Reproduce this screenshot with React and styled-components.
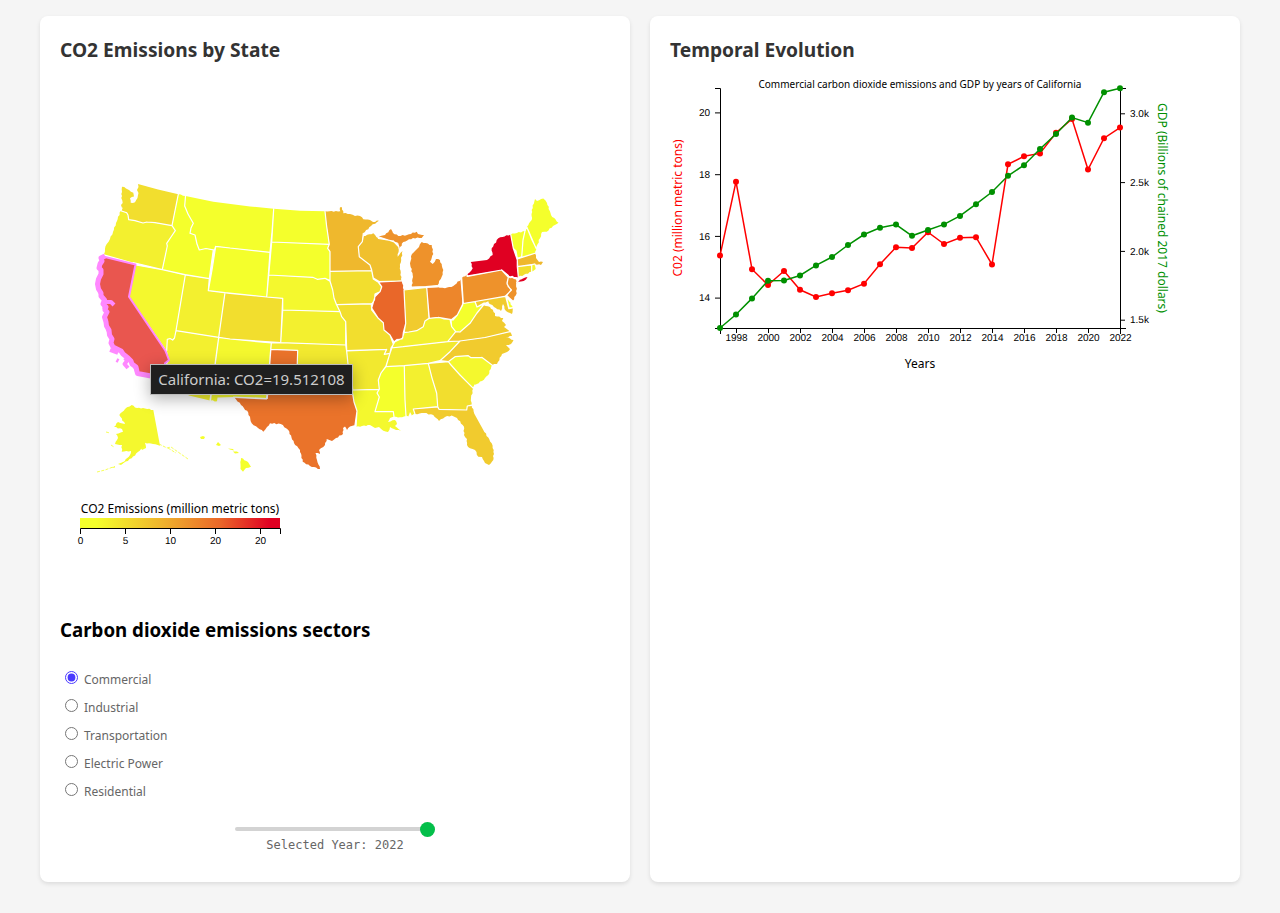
import React, { useState } from "react";
import styled, { createGlobalStyle } from "styled-components";

const GlobalStyle = createGlobalStyle`
  body { margin: 0; background: #f5f5f5; font-family: "Noto Sans", sans-serif; }
  * { box-sizing: border-box; }
`;

const Dashboard = styled.main`
  display: grid;
  grid-template-columns: 590px 590px;
  gap: 20px;
  justify-content: center;
  padding: 16px 0 31px;
`;

const Card = styled.section`
  height: 866px;
  padding: 20px;
  background: #fff;
  border-radius: 8px;
  box-shadow: 0 2px 4px rgba(0, 0, 0, 0.1);
`;

const Title = styled.h3`
  margin: ${(p) => p.$margin || "0"};
  font-size: ${(p) => p.$size || "19.2px"};
  line-height: 28px;
  font-weight: 700;
  color: ${(p) => p.$color || "#333"};
`;

const MapArea = styled.div`
  position: relative;
  height: 540px;
`;

const Drawing = styled.svg`
  display: block;
  overflow: visible;
`;

const StateShape = styled.path`
  fill: ${(p) => p.$fill};
`;

const Borders = styled.path`
  fill: none;
  stroke: #fff;
  stroke-width: 1.2px;
  stroke-linejoin: round;
  stroke-linecap: round;
`;

const SelectedState = styled.path`
  fill: #e9564f;
  stroke: #ff88ff;
  stroke-width: ${(p) => p.$width || 2}px;
  stroke-linejoin: round;
`;

const Coast = styled(SelectedState)`
  fill: none;
`;

const Label = styled.text`
  font-family: "Noto Sans", sans-serif;
  font-size: ${(p) => p.$size || 12}px;
  fill: ${(p) => p.$color || "#000"};
  text-anchor: middle;
`;

const TickLabel = styled.text`
  font-family: "Liberation Sans", Arial, sans-serif;
  font-size: 10px;
  fill: #000;
  text-anchor: ${(p) => p.$anchor || "middle"};
  text-rendering: geometricPrecision;
`;

const AxisLine = styled.path`
  fill: none;
  stroke: #000;
`;

const Series = styled.path`
  fill: none;
  stroke: ${(p) => p.$color};
  stroke-width: 1.5px;
`;

const Tooltip = styled.div`
  position: absolute;
  left: 90px;
  top: 300px;
  width: 203px;
  height: 31px;
  border: 1px solid #bbb;
  background: #1f1f1f;
  color: #ccc;
  font-size: 15px;
  line-height: 29px;
  text-align: center;
  white-space: nowrap;
  box-shadow: 0 4px 16px rgba(0, 0, 0, 0.3);
`;

const SectorList = styled.div`
  display: flex;
  flex-direction: column;
  margin-top: 21px;
`;

const Sector = styled.label`
  display: flex;
  align-items: center;
  height: 28px;
  font-size: 12px;
  color: #666;
`;

const Radio = styled.input`
  width: 13px;
  height: 13px;
  margin: 0 6px 3px 5px;
  accent-color: #4a3aff;
`;

const YearPicker = styled.div`
  display: flex;
  flex-direction: column;
  align-items: center;
  padding-top: 16px;
`;

const Slider = styled.input`
  appearance: none;
  width: 200px;
  height: 16px;
  margin: 0;
  background: transparent;
  &::-webkit-slider-runnable-track {
    height: 4px;
    border-radius: 2px;
    background: #d3d3d3;
  }
  &::-webkit-slider-thumb {
    appearance: none;
    width: 15px;
    height: 15px;
    margin-top: -5px;
    border-radius: 50%;
    background: #04bf4a;
  }
`;

const YearText = styled.span`
  font-family: "DejaVu Sans Mono", monospace;
  font-size: 12px;
  line-height: 16px;
  color: #666;
`;

const C = {
  low: "#f4ff2c", pale: "#f4f82e", soft: "#f3f02f", mild: "#f2e92f",
  gold: "#f2de2e", amber: "#f1cb2e", sand: "#f0c02e", tan: "#efb82d",
  orange: "#ee922b", deep: "#ed862b", texas: "#ea732a", illinois: "#e96729",
  red: "#e00022",
};

const states = [
  ["WA", "gold", "120.9,210.7 122,208 121,205 122.7,203 121.3,198 122,192 122,186.7 126,188.5 129,190 133.3,192.7 134,196.5 130,198.3 130.7,202.7 135,202.3 137.5,198 138.5,193 137,190 138.5,187 138,184 158,189.5 178.3,194.3 172,225.7 155,222.7 147,222 143,223 135,220.7 128.7,219.7 128,215 126.7,212.7"],
  ["OR", "soft", "120.7,210.7 126.7,212.7 128,215 128.7,219.7 135,220.7 143,223 147,222 155,222.7 172,225.7 175.3,230.7 171,237 166.7,243.3 167.3,246 162.3,269.7 133,262.5 104,254.3 105,249 106.7,244 110,239 113,232 116,223"],
  ["ID", "low", "178.3,194.3 185.5,196 184.7,206 188,214 193.3,223.3 191,228 190,233.3 195,235 197,244 199.3,250 206,248.5 213.3,250 209.3,278.7 185,274.5 162.3,269.7 167.3,246 166.7,243.3 171,237 175.3,230.7 172,225.7"],
  ["MT", "low", "185.5,196 213.3,201.7 250,206.5 273.7,208.7 272,232 270,252.3 230,248 215.7,246.3 214.5,250 206,248.5 199.3,250 197,244 195,235 190,233.3 191,228 193.3,223.3 188,214 184.7,206"],
  ["WY", "low", "215.7,246.3 230,248 270,252.3 266.7,297 230,293.3 208.3,290.7 212,270"],
  ["NV", "pale", "136,265 162.3,269.7 185.3,275 176,330.7 174.5,338 172.7,340 170,338.5 167.3,339.3 166.7,350.7 129.3,296.7"],
  ["UT", "soft", "185.3,275 209.3,278.7 208.3,290.7 225,292.7 218.7,337.3 176,330.7"],
  ["CO", "gold", "225,292.7 266.7,297 282.7,298.3 280.7,342.7 230,339 218.7,337.3"],
  ["AZ", "soft", "176,330.7 218.7,337.3 210,400.5 189,395.5 164,380 166,367 169.3,360 166.7,350.7 167.3,339.3 170,338.5 172.7,340 174.5,338"],
  ["NM", "pale", "218.7,337.3 230,339 271.3,343 267.3,398.5 233.5,397 217.5,397.5 217,401.3 210.5,400.5"],
  ["TX", "texas", "270.7,349.3 297.7,350.3 297,372 324,387 352,390 354,402 357,411 355,425 350,426.5 347,430 345,426.5 343,428 343,434 336,438 332,441 326.7,439 325,445 319,450 320,454 315.5,453 317,460 320,469 310,466 302.7,461.7 300,450 294,443 288.3,430 280.7,424 270,423.3 267,427 263.3,431.7 258,428 251.7,423.3 248.3,412.7 241,405 234.5,397.5 266.5,399"],
  ["ND", "low", "273.7,208.7 300,210.8 325,211.3 326.7,226.7 329.3,244.3 271.7,242"],
  ["SD", "low", "271.7,242 329.3,244.3 327.7,248.3 330,251.7 330,280.5 325,278.3 317.3,279.3 312.7,277.3 268.7,275"],
  ["NE", "pale", "268.7,275 312.7,277.3 317.3,279.3 325,278.3 330,281.3 332.7,290 334,298 336.7,305 340,311.7 282.7,310 282.7,298.3 266.7,297"],
  ["KS", "soft", "282.7,310 340,311.7 341.7,316.7 345.7,321.7 345.7,345 280.7,342.7"],
  ["OK", "mild", "271.3,343 280.7,342.7 345.7,345 346.7,351.7 348,364 350,389 324,385 297,372 297.7,350.3 270.7,349.3"],
  ["MN", "tan", "325,211.3 340.3,211.3 340,207.3 342,207.3 343.3,213.3 350,214 355,216 360,216 363.3,219.3 370,220 373,222 379,220.7 371,226 363.3,233.3 362.3,241.7 358.3,246.7 359.3,256.7 370,265 371.7,270.7 330,271.3 330,251.7 327.7,248.3 329.3,244.3 326.7,226.7"],
  ["IA", "gold", "330,271.3 371.7,270.7 373.3,279 378,282 381.7,287 380,291.7 375,294 374.5,300 371.7,304 336.5,304.7 334,298 332.7,290 330,281"],
  ["MO", "gold", "336.7,304.7 371.3,303.7 371.7,310 378.3,318.3 383.3,322.7 384,330 390,335 393.3,344 390,353.3 384.3,354.3 386.7,349.3 346.7,350.7 345.7,321.7 341.7,316.7 340,311.7"],
  ["AR", "mild", "346.7,351 386.7,349.3 384.3,354.3 390,353.3 386,366 381,373 378.3,380 379.3,389.3 353.3,390 352,370 348,364"],
  ["LA", "pale", "352,390 379.3,389.3 377,393 379.3,397 375,411.7 393.3,411.7 394,416.7 390,418 388,422 395,420 397,424 395,426 401,430.7 396,430 390,427 388,432 383.3,430.7 379,427 375,428 370,425 356,427 357,411 354,402"],
  ["MS", "low", "386,366.7 404.3,365.7 405,400 406,416 400,417.3 394,416.7 393.3,411.7 375,411.7 379.3,397 377,393 379.3,389.3 378.3,380 381,373"],
  ["AL", "soft", "404.3,365.7 428.3,363.3 432,378 436.7,393.3 437.7,406.7 413.3,409 415,414 412,416 410,412 408,417 406,416 405,400"],
  ["GA", "gold", "428.3,363.3 448.3,361.7 451,365 460,375 473.3,388.3 471,398 471.7,405 467.3,406 466.7,410 439,409.3 437.7,406.7 436.7,393.3 432,378"],
  ["FL", "amber", "413.3,409 437.7,407 439,409.3 466.7,410 467.3,406 471.7,405.5 475,415 483.3,430 491.7,443.3 493.7,450 493.3,460 489,465 485,463 482,457 478.3,456.7 475,450 470,448.3 467,445 467,439 464,435 464,426.7 457,418 451.7,415.5 445,417 439,421 433.3,415 424,413 415,414"],
  ["SC", "pale", "448.3,361.7 455,356.7 468.3,355.7 471,357.7 481.7,357.3 492,365 488.3,375 482,381 475,385 473.3,388.3 460,375 451,365"],
  ["TN", "mild", "391,348 403.3,346.7 447.7,341.7 460,341 450,351.7 440,360.7 428.3,363.3 404.3,365.7 386,366.7 390,353"],
  ["NC", "amber", "460,341 485,337.5 510,331.7 512,336 506,337 513.5,340 511,344 506,345 510,349 507,352 502,354 497,364 492,365 481.7,357.3 471,357.7 468.3,355.7 455,356.7 448.3,361.7 440,360.7 450,351.7"],
  ["KY", "soft", "395,341.7 402.7,338 403.3,332.7 409,332 416.7,330.7 423.3,326.7 425,321 429.3,318.3 438.3,317.3 450,319.3 451.7,326.7 455.7,331.7 447.7,341.7 403.3,346.7 391,348"],
  ["IL", "illinois", "378.3,281.7 401.7,281 404,290 405.7,323.3 404,333 402,339 397,339.5 394,342 390,335 384,330 383.3,322.7 378.3,318.3 371.7,308 375,296.7 380,291.7 381.7,286.7"],
  ["IN", "amber", "404,290 426.7,287.3 429,318.3 425,321 423.3,326.7 416.7,330.7 409,332 403.3,332.7 405.7,323.3"],
  ["OH", "deep", "426.7,287.3 437.3,287 445,288.3 453.3,286 461,279.3 462.7,300 462.7,305 457.3,315 453,320 450,319.3 444,319 438.3,317.3 429.3,318.3"],
  ["MI", "orange", "412,287 426,286.5 437.3,285.5 441.7,276.7 443.3,270 440,260 436,259 432.7,264 430,261.7 433.3,254 431.7,245 421.7,242 419,247 415,251 412,254 410,263.3 412.7,275"],
  ["MI-upper", "orange", "378.3,236.7 385,235 391,229 393,233 398.3,236 407,235 416.7,231.7 418,234 424,235 421.7,238 413,238 403.3,242 399.3,249 397.7,243.3 388.3,240"],
  ["WI", "sand", "363.3,236 373.3,233.3 378.3,238.3 393.3,241 399,247 397.7,256.7 402.5,251 400,266.7 401.5,281 380,282 373.3,278 371.7,270 370,265 359.3,256.7 358.3,246.7 362.3,241.7"],
  ["PA", "orange", "461.7,278.3 466.7,274.5 467.5,276.5 501.7,270 508.3,277.3 507,283 508.3,286.7 511.5,290 505,296.5 463.3,303.5"],
  ["NY", "red", "466.7,276 472.7,268.3 470.7,262 487,260 492.7,255 491.7,248.3 498.3,238.3 510.7,234.3 513.3,248.3 517.3,260 518.3,277.5 508.3,275.5 501.7,270"],
  ["LI", "red", "516.8,282.5 519,280 523,278.5 527.5,277 526,279.5 521,281.5"],
  ["VT", "low", "510.7,234.3 525,231 523,240 521.7,256.7 517.3,258.3 516,251 513.3,248.3"],
  ["NH", "low", "525,231 526.7,226.7 532,240 536.7,249.3 535,253.3 521.7,257.3 523,240"],
  ["ME", "low", "526.7,226.7 531.7,220 531.7,210 535,199 537,201 543.3,198.5 547,203 551,215 558.5,222.7 553,226 546.7,231.7 542,232 540,238.3 536,248.3"],
  ["MA", "tan", "517.3,259 535,253.3 536,258 539,262 543,262 541,265 535,264 517.3,266.7"],
  ["CT", "gold", "517.3,266.7 531.7,265 531.7,271.7 518.3,277"],
  ["RI", "pale", "531.7,265 534.3,264 535.7,269 531.7,271.7"],
  ["NJ", "orange", "508.3,277.3 516,279.5 516.7,293.3 512.7,301 506.7,295.5 511,290 507,284"],
  ["MD", "amber", "475,301.5 506,296 509,308 513,307.5 512,314 506,311 503,304 501,311 494,307 488,302 484,304 477,307"],
  ["DE", "low", "505.7,296.5 508,299 513,308 508.8,308.7"],
  ["VA", "amber", "447.7,341.7 455.7,331.7 460,332 470,323.3 477,313 483.5,305 490,307 495,313.3 495,316 503.3,318 502,321 506,325 504,327 510,331.7 485,337.5 460,341"],
  ["WV", "low", "463,303.5 475,301.7 477,307 484,303 488,303 483.5,305 477,313 470,323.3 460,332 455.7,331.7 451.7,326.7 451,320 457.3,315"],
  ["AK", "pale", "153.3,410 160,445.7 153,444 145,442.7 146,448 141,449 131.7,458.3 121.7,464 130,455 131,451 121.7,451.7 122,445 115,444 118,438 116,434 123,431.7 122,429 114,427 118,422 125,424 119.3,415 125,409 131.7,405 137,408 143,408"],
  ["HI", "low", "241,458 248,462 251,466.7 246,468 243,471.7 240.5,469 240.5,464"],
];

const distance = (px, py, [ax, ay, bx, by]) => {
  const dx = bx - ax;
  const dy = by - ay;
  const t = Math.max(0, Math.min(1, ((px - ax) * dx + (py - ay) * dy) / (dx * dx + dy * dy)));
  return Math.hypot(px - ax - t * dx, py - ay - t * dy);
};

/* Splits every outline into borders shared with a neighbour and open coast;
   short coast segments are roughened so that shores look ragged. */
function buildMap() {
  const outlines = states.map(([id, tone, text]) => {
    const pts = text.split(" ").map((p) => p.split(",").map(Number));
    return { id, tone, edges: pts.map((p, i) => [...p, ...pts[(i + 1) % pts.length]]) };
  });
  let borders = "";
  const shapes = outlines.map(({ id, tone, edges }) => {
    let d = "";
    edges.forEach((e, n) => {
      const [ax, ay, bx, by] = e;
      const mx = (ax + bx) / 2;
      const my = (ay + by) / 2;
      const shared = outlines.some((o) => o.id !== id && o.edges.some((f) => distance(mx, my, f) < 2));
      d += `${d ? "L" : "M"}${ax},${ay}`;
      if (shared) {
        borders += `M${ax},${ay}L${bx},${by}`;
        return;
      }
      const len = Math.hypot(bx - ax, by - ay);
      if (len > 16) return;
      const steps = Math.floor(len / 2);
      for (let k = 1; k < steps; k++) {
        const off = Math.sin(n * 7.3 + k * 2.4 + ax) * 0.5;
        const x = ax + ((bx - ax) * k) / steps - ((by - ay) / len) * off;
        const y = ay + ((by - ay) * k) / steps + ((bx - ax) / len) * off;
        d += `L${x.toFixed(1)},${y.toFixed(1)}`;
      }
    });
    return { id, fill: C[tone], d: d + "Z" };
  });
  return { shapes, borders };
}

const usMap = buildMap();

const california = "104,256.7 135.5,264.5 129,296.7 165.3,350.5 169,360 165,363.3 164,376 137,374 134,367 126.7,357.3 119.3,350.7 112.5,347 111.7,339 107,330 105,319.3 107,313 103.3,308.3 104,301.7 99.3,292.7 98.3,280 101,270 99,263";

const co2 = [255.6, 181.7, 269.2, 285, 271, 289.8, 297, 293.2, 290.2, 283.7, 264.2, 247.3, 248, 232.2, 244, 237.7, 237.2, 264.5, 164.3, 156.3, 153.4, 132.8, 119, 169.6, 138.2, 127.6];
const gdp = [328, 314.5, 298.4, 280.7, 280.5, 275.5, 265.4, 257, 245, 234.5, 227.7, 224.6, 235.8, 230, 224.4, 215.9, 204.2, 192, 175.8, 165.2, 149, 134, 117.6, 122.7, 92.2, 88.2];
const trace = (ys) => "M" + ys.map((y, i) => `${720 + i * 16},${y}`).join("L");

function Choropleth() {
  return (
    <MapArea>
      <Drawing width="550" height="540" viewBox="60 64 550 540">
        <defs>
          <linearGradient id="scale">
            <stop offset="0.08" stopColor="#f4ff2c" />
            <stop offset="0.42" stopColor="#efb12d" />
            <stop offset="0.7" stopColor="#ea6729" />
            <stop offset="0.95" stopColor="#e00022" />
          </linearGradient>
        </defs>
        {usMap.shapes.map(({ id, fill, d }) => (
          <StateShape key={id} $fill={fill} d={d} />
        ))}
        <Borders d={usMap.borders} />
        <SelectedState d={`M${california}Z`} />
        <Coast
          $width={5}
          d="M105,256 L101,258 102,261 100,264 99,268 101,270 101,274 98.5,279 97.5,284 98.5,289 101,293 101,296 104.5,300 103,304 106,307 105,310 107,312 104.5,317 106,322 106.5,326 109,330 109.5,335 112,339 111,343 113,347 117,349 121,351 123,354 128,358 131,361 132,364 136,367 137.5,373.5 151,376"
        />
        <Coast $width={4} d="M106,302L111,302L114,305M110,350L118,353M116.5,360L118.5,361M125,358L127,361L124.5,364L128,368" />
        <g fill="#f4ff2c">
          <path d="M200,437l3,-1 2,1 -1,2 -3,0zM216,445l2,-3 3,3 -2,1zM228,448.5l5,0.5 1,1.5 -4,-1zM233,451.5l4,0 2,1.5 -4,0.6z" />
          <path d="M141,448l4,-2 1,2 -4,2zM118,464l8,-3 -5,4zM111,468l4,-2 0,1.5z" />
          <path
            d="M159,444l8,4 4,-1 7,5 10,7M168,448l8,5M97,472l8,-2 8,-3M106,432l4,1M111,445l3,2"
            stroke="#f4ff2c"
            fill="none"
            strokeWidth="0.8"
            strokeDasharray="3 1.4"
          />
        </g>
        <Label x="180" y="513">CO2 Emissions (million metric tons)</Label>
        <rect x="80" y="518" width="200" height="10" fill="url(#scale)" />
        <AxisLine d="M80.5,534V528.5H280.5V534M125.5,528V534M170.5,528V534M215.5,528V534M260.5,528V534" />
        {["0", "5", "10", "20", "20"].map((t, i) => (
          <TickLabel key={i} x={80.5 + i * 45} y="544">{t}</TickLabel>
        ))}
      </Drawing>
      <Tooltip>California: CO2=19.512108</Tooltip>
    </MapArea>
  );
}

function TemporalChart() {
  return (
    <Drawing width="550" height="330" viewBox="670 64 550 330">
      <Label x="920" y="88" $size={10}>Commercial carbon dioxide emissions and GDP by years of California</Label>
      <AxisLine d="M720.5,334V328.5H1120.5V334" />
      <AxisLine d="M715,88.5H720.5V328.5H715" />
      <AxisLine d="M1126,88.5H1120.5V328.5H1126" />
      {Array.from({ length: 13 }, (_, i) => (
        <g key={i}>
          <AxisLine d={`M${736.5 + i * 32},328V333`} />
          <TickLabel x={736.5 + i * 32} y="341">{1998 + i * 2}</TickLabel>
        </g>
      ))}
      {[[20, 112.9], [18, 174.7], [16, 236.4], [14, 298.1]].map(([t, y]) => (
        <g key={t} transform={`translate(720,${y})`}>
          <AxisLine d="M-5,0H0" />
          <TickLabel $anchor="end" x="-10" dy="0.32em">{t}</TickLabel>
        </g>
      ))}
      {[["3.0k", 113.8], ["2.5k", 182.6], ["2.0k", 251.4], ["1.5k", 320.2]].map(([t, y]) => (
        <g key={t} transform={`translate(1120,${y})`}>
          <AxisLine d="M0,0H5" />
          <TickLabel $anchor="start" x="10" dy="0.32em">{t}</TickLabel>
        </g>
      ))}
      {[["red", co2], ["#009000", gdp]].map(([color, ys]) => (
        <g key={color}>
          <Series $color={color} d={trace(ys)} />
          {ys.map((y, i) => <circle key={i} cx={720 + i * 16} cy={y} r="3" fill={color} />)}
        </g>
      ))}
      <Label $color="red" transform="translate(682 208) rotate(-90)">C02 (million metric tons)</Label>
      <Label $color="#009000" transform="translate(1158 208) rotate(90)">GDP (Billions of chained 2017 dollars)</Label>
      <Label x="920" y="368">Years</Label>
    </Drawing>
  );
}

const sectors = ["Commercial", "Industrial", "Transportation", "Electric Power", "Residential"];

export default function App() {
  const [sector, setSector] = useState("Commercial");
  const [year, setYear] = useState(2022);
  return (
    <>
      <GlobalStyle />
      <Dashboard>
        <Card>
          <Title>CO2 Emissions by State</Title>
          <Choropleth />
          <Title $color="#000" $size="18.72px" $margin="12px 0 0">Carbon dioxide emissions sectors</Title>
          <SectorList>
            {sectors.map((name) => (
              <Sector key={name}>
                <Radio type="radio" name="sector" checked={sector === name} onChange={() => setSector(name)} />
                {name}
              </Sector>
            ))}
          </SectorList>
          <YearPicker>
            <Slider type="range" min="1997" max="2022" value={year} onChange={(e) => setYear(e.target.value)} />
            <YearText>Selected Year: {year}</YearText>
          </YearPicker>
        </Card>
        <Card>
          <Title>Temporal Evolution</Title>
          <TemporalChart />
        </Card>
      </Dashboard>
    </>
  );
}
